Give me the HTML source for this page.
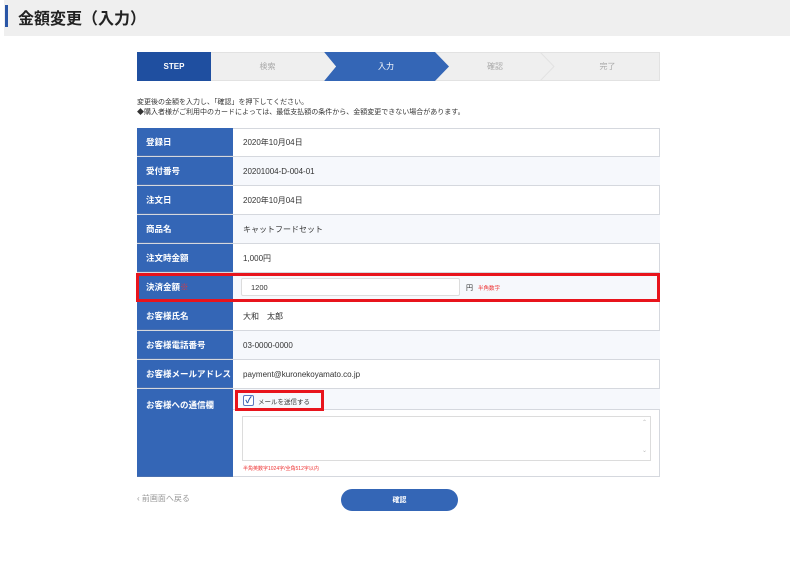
<!DOCTYPE html>
<html><head><meta charset="utf-8"><style>
*{box-sizing:border-box;margin:0;padding:0}
body{width:790px;height:561px;background:#fff;font-family:"Liberation Sans","Noto Sans CJK JP",sans-serif;position:relative;overflow:hidden;color:#333}
.a{position:absolute}
.hdr{left:4px;top:0;width:786px;height:36px;background:#efefef}
.bar{left:5px;top:5px;width:3px;height:22px;background:#2a56a6}
.ttl{left:18px;top:5px;font-size:16px;font-weight:bold;color:#222}
.step{top:52px;height:29px;display:flex;align-items:center;justify-content:center;font-size:8px}
.row{left:137px;width:523px;border-bottom:1px solid #d5d8de}
.lab{position:absolute;left:0;top:0;width:96px;height:100%;background:#3466b6;color:#fff;font-size:8.5px;font-weight:bold;padding-left:9px;display:flex;align-items:center;border-bottom:1px solid #4a70b0}
.val{position:absolute;left:106px;top:0;height:100%;display:flex;align-items:center;font-size:8px;color:#333}
</style></head><body>
<div class="a hdr"></div><div class="a bar"></div>
<div class="a ttl">金額変更（入力）</div>

<div class="a" style="left:137px;top:52px;width:523px;height:29px;background:#efefef;border:1px solid #e2e2e2"></div>
<div class="a step" style="left:137px;width:74px;background:#1f4fa0;color:#fff;font-weight:bold">STEP</div>
<div class="a step" style="left:211px;width:113px;color:#aaa">検索</div>
<svg class="a" style="left:324px;top:52px" width="126" height="29"><polygon points="0,0 111,0 125,14.5 111,29 0,29 12,14.5" fill="#3466b6"/><polygon points="0,0 12,14.5 0,29" fill="#efefef"/></svg>
<div class="a step" style="left:336px;width:100px;color:#fff">入力</div>
<div class="a step" style="left:440px;width:110px;color:#aaa">確認</div>
<svg class="a" style="left:540px;top:52px" width="16" height="29"><polyline points="0,0 14,14.5 0,29" fill="none" stroke="#e2e2e2"/></svg>
<div class="a step" style="left:555px;width:105px;color:#aaa">完了</div>

<div class="a" style="left:137px;top:98px;font-size:7px;line-height:10px;color:#333">変更後の金額を入力し、「確認」を押下してください。<br>◆購入者様がご利用中のカードによっては、最低支払額の条件から、金額変更できない場合があります。</div>

<div class="a" style="left:137px;top:128px;width:523px;height:349px;border:1px solid #d5d8de"></div>
<div class="a row" style="top:128px;height:29px"><div class="lab">登録日</div><div class="val">2020年10月04日</div></div>
<div class="a row" style="top:157px;height:29px;background:#f6f8fc"><div class="lab">受付番号</div><div class="val">20201004-D-004-01</div></div>
<div class="a row" style="top:186px;height:29px"><div class="lab">注文日</div><div class="val">2020年10月04日</div></div>
<div class="a row" style="top:215px;height:29px;background:#f6f8fc"><div class="lab">商品名</div><div class="val">キャットフードセット</div></div>
<div class="a row" style="top:244px;height:29px"><div class="lab">注文時金額</div><div class="val">1,000円</div></div>
<div class="a row" style="top:273px;height:29px;background:#f6f8fc"><div class="lab">決済金額<span style="color:#e33">※</span></div>
 <div class="a" style="left:104px;top:5px;width:219px;height:18px;background:#fff;border:1px solid #dcdcdc;border-radius:2px;font-size:7.5px;padding:4px 0 0 9px">1200</div>
 <div class="a" style="left:329px;top:10px;font-size:7px">円</div>
 <div class="a" style="left:341px;top:11px;font-size:5.5px;color:#e33">半角数字</div></div>
<div class="a" style="left:136px;top:273px;width:524px;height:29px;border:3px solid #e8141c"></div>
<div class="a row" style="top:302px;height:29px"><div class="lab">お客様氏名</div><div class="val">大和　太郎</div></div>
<div class="a row" style="top:331px;height:29px;background:#f6f8fc"><div class="lab">お客様電話番号</div><div class="val">03-0000-0000</div></div>
<div class="a row" style="top:360px;height:29px"><div class="lab">お客様メールアドレス</div><div class="val">payment@kuronekoyamato.co.jp</div></div>
<div class="a row" style="top:389px;height:88px;border-bottom:none"><div class="lab" style="align-items:flex-start;padding-top:10px">お客様への通信欄</div>
 <div class="a" style="left:96px;top:0;width:427px;height:21px;background:#f6f8fc;border-bottom:1px solid #d5d8de"></div>
 <div class="a" style="left:106px;top:6px;width:11px;height:11px;border:1px solid #5a78c0;border-radius:2px;background:#fff;font-size:9px;line-height:9px;color:#2a56a6;text-align:center;font-weight:bold">✓</div>
 <div class="a" style="left:121px;top:7px;font-size:6.5px">メールを送信する</div>
 <div class="a" style="left:105px;top:27px;width:409px;height:45px;border:1px solid #dcdcdc;background:#fff"></div>
 <div class="a" style="left:505px;top:30px;font-size:6px;color:#bbb">⌃</div>
 <div class="a" style="left:505px;top:58px;font-size:6px;color:#bbb">⌄</div>
 <div class="a" style="left:106px;top:76px;font-size:5px;color:#e33">半角英数字1024字/全角512字以内</div></div>
<div class="a" style="left:235px;top:390px;width:89px;height:21px;border:3px solid #e8141c"></div>

<div class="a" style="left:137px;top:493px;font-size:8px;color:#999">‹ 前画面へ戻る</div>
<div class="a" style="left:341px;top:489px;width:117px;height:22px;background:#3466b6;border-radius:11px;color:#fff;font-size:7px;font-weight:bold;display:flex;align-items:center;justify-content:center">確認</div>
</body></html>
